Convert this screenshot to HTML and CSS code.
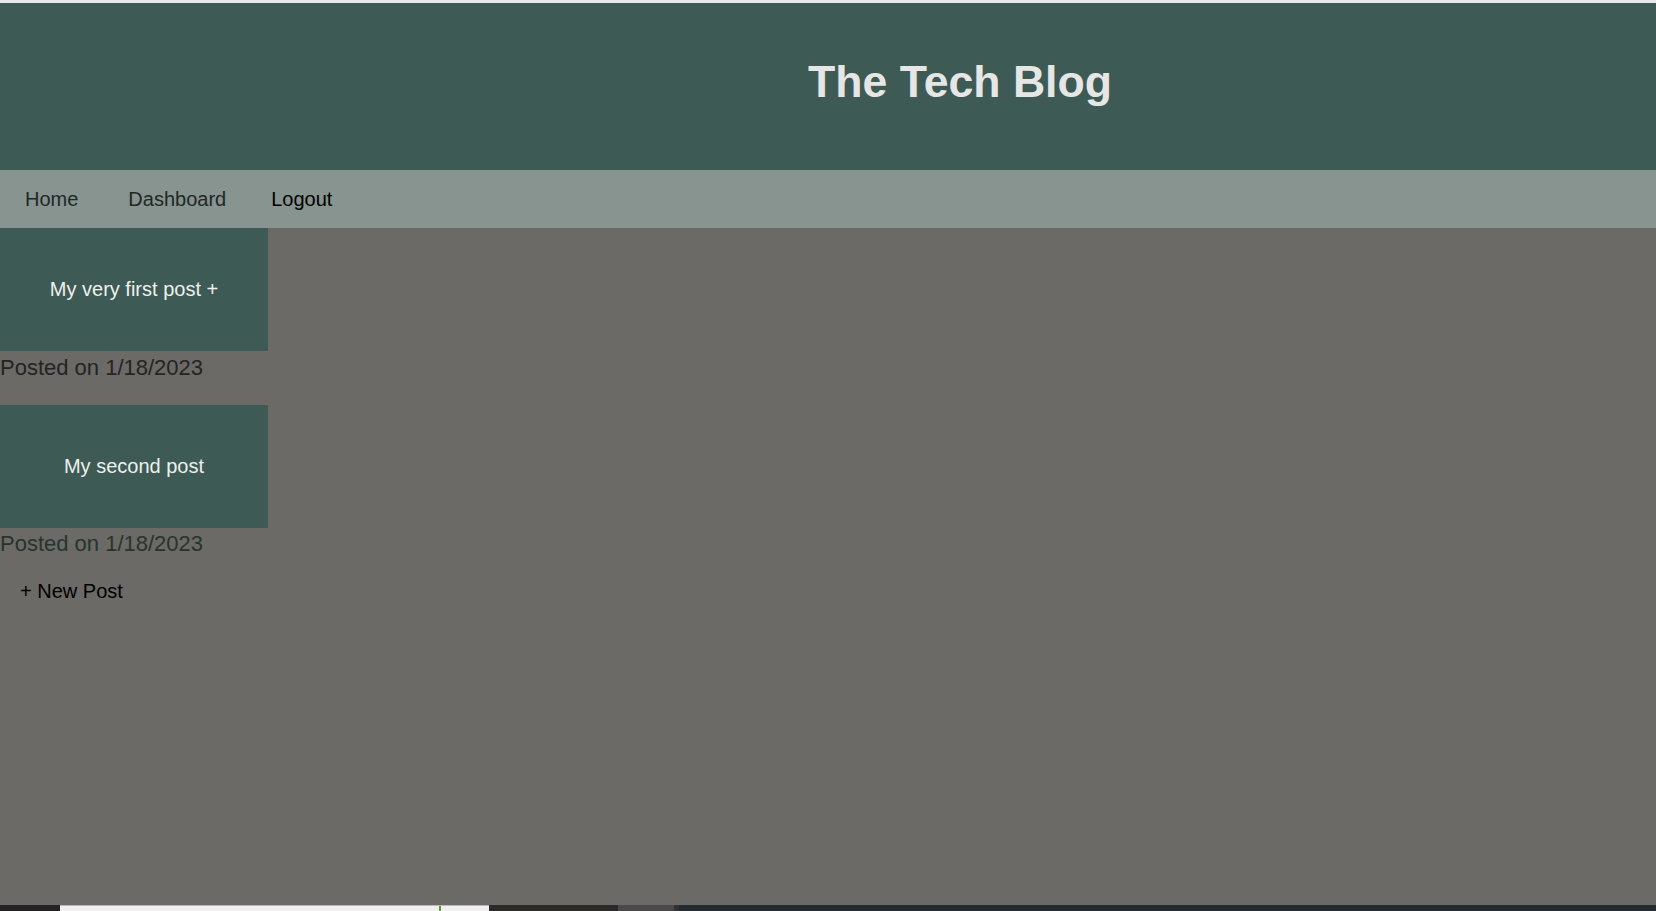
FILE: index.html
```html
<!DOCTYPE html>
<html lang="en">
<head>
<meta charset="utf-8">
<title>The Tech Blog</title>
<link rel="stylesheet" href="styles.css">
</head>
<body>
<div class="page">
  <div class="top-strip"></div>
  <header class="site-header">
    <h1 class="site-title">The Tech Blog</h1>
  </header>
  <nav class="site-nav">
    <a class="nav-link" href="#">Home</a>
    <a class="nav-link nav-dashboard" href="#">Dashboard</a>
    <a class="nav-link nav-logout" href="#">Logout</a>
  </nav>
  <main class="main">
    <section class="post">
      <div class="post-card">My very first post +</div>
      <p class="post-date">Posted on 1/18/2023</p>
    </section>
    <section class="post">
      <div class="post-card">My second post</div>
      <p class="post-date post-date-alt">Posted on 1/18/2023</p>
    </section>
    <div class="new-post">+ New Post</div>
  </main>
  <div class="taskbar">
    <div class="tb tb-start"></div>
    <div class="tb tb-search"><span class="tb-mark"></span></div>
    <div class="tb tb-dark"></div>
    <div class="tb tb-grey"></div>
    <div class="tb tb-sep"></div>
    <div class="tb tb-rest"></div>
  </div>
</div>
</body>
</html>
```

FILE: styles.css
```css
html, body {
  margin: 0;
  padding: 0;
}

body {
  font-family: "Liberation Sans", Arial, sans-serif;
  background: #6b6a66;
}

.page {
  height: 911px;
  display: flex;
  flex-direction: column;
  overflow: hidden;
}

.top-strip {
  height: 3px;
  background: #e6e8e8;
  flex: none;
}

.site-header {
  flex: none;
  height: 167px;
  background: #3d5a54;
  display: flex;
  align-items: center;
  justify-content: center;
  padding-left: 264px;
  padding-bottom: 10px;
  box-sizing: border-box;
}

.site-title {
  margin: 0;
  font-size: 44.6px;
  font-weight: bold;
  color: #e6e6e6;
  line-height: normal;
}

.site-nav {
  flex: none;
  height: 58px;
  background: #87948f;
  display: flex;
  align-items: center;
  padding-left: 25px;
}

.nav-link {
  font-size: 20px;
  color: #222826;
  text-decoration: none;
  line-height: 23px;
}

.nav-dashboard {
  margin-left: 50px;
}

.nav-logout {
  margin-left: 45px;
  color: #000;
}

.main {
  flex: 1;
}

.post-card {
  width: 268px;
  height: 123px;
  background: #3d5a54;
  color: #eef0ef;
  font-size: 20px;
  display: flex;
  align-items: center;
  justify-content: center;
}

.post-date {
  margin: 4px 0 24px 0;
  font-size: 22px;
  color: #242424;
  line-height: normal;
}

.post-date-alt {
  margin-top: 3px;
  color: #27342f;
}

.new-post {
  padding-left: 20px;
  margin-top: -1px;
  font-size: 20px;
  line-height: 23px;
  color: #000;
}

.taskbar {
  flex: none;
  height: 6px;
  display: flex;
}

.tb {
  height: 6px;
}

.tb-start {
  width: 60px;
  background: #232325;
}

.tb-search {
  width: 429px;
  background: #f0f0f0;
  border-top: 1px solid #b8b8b8;
  box-sizing: border-box;
  position: relative;
}

.tb-mark {
  position: absolute;
  left: 379px;
  top: 0;
  width: 2px;
  height: 5px;
  background: #5c9a2c;
}

.tb-dark {
  width: 129px;
  background: #2b2a29;
}

.tb-grey {
  width: 56px;
  background: #4a4a4a;
}

.tb-sep {
  width: 5px;
  background: #333;
}

.tb-rest {
  flex: 1;
  background: #252a30;
}
```
